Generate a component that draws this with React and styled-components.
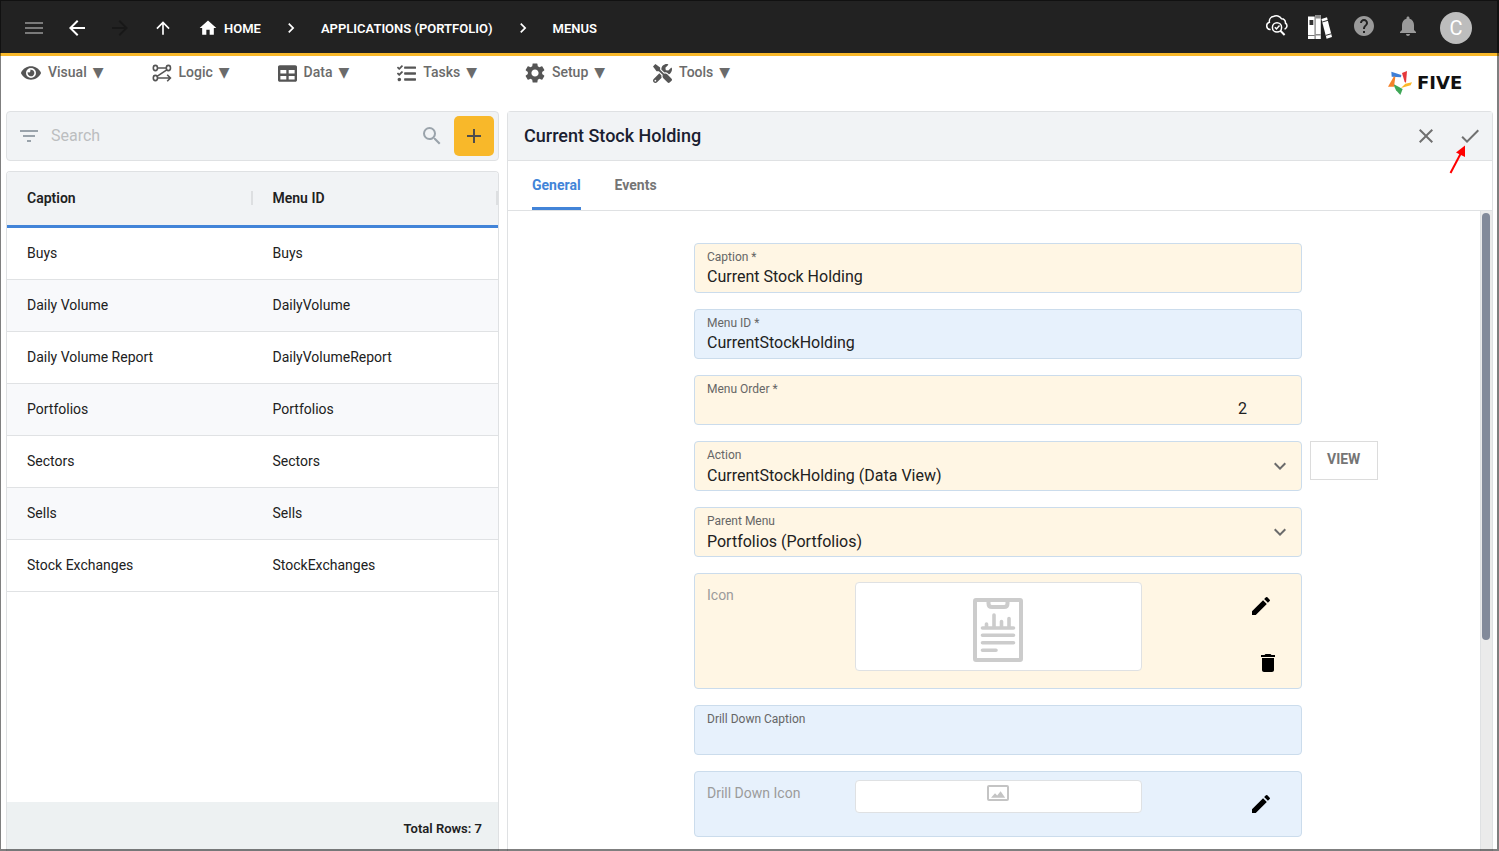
import React, { useState } from 'react';
import styled, { createGlobalStyle, css } from 'styled-components';
import {
  MdAdd,
  MdArrowBack,
  MdArrowForward,
  MdArrowUpward,
  MdCheck,
  MdChevronRight,
  MdClose,
  MdDelete,
  MdEdit,
  MdFilterList,
  MdHelp,
  MdHome,
  MdKeyboardArrowDown,
  MdMenu,
  MdNotifications,
  MdSearch,
  MdSettings,
} from 'react-icons/md';
import { FaEye, FaTable, FaTasks, FaTools } from 'react-icons/fa';

const GlobalStyle = createGlobalStyle`
  * {
    box-sizing: border-box;
  }
  body {
    margin: 0;
    background: #ffffff;
    color: #212121;
    font-family: Roboto, "Liberation Sans", sans-serif;
    font-size: 14px;
  }
  button, input, select {
    font-family: inherit;
    margin: 0;
  }
  svg {
    display: block;
    flex: none;
  }
`;

const Page = styled.div`
  height: 100vh;
  display: flex;
  flex-direction: column;
  overflow: hidden;
  &::after {
    content: '';
    position: fixed;
    inset: 0;
    border: solid rgba(0, 0, 0, 0.5);
    border-width: 1px 2px 2px 1px;
    pointer-events: none;
  }
`;

/* top bar */
const TopBar = styled.header`
  flex: none;
  height: 56px;
  padding: 3px 27px 0 22px;
  display: flex;
  align-items: center;
  justify-content: space-between;
  background: #222222;
  border-bottom: 3px solid #f8b82a;
`;
const NavGroup = styled.nav`
  display: flex;
  align-items: center;
  gap: 19px;
`;
const IconButton = styled.button`
  flex: none;
  display: flex;
  align-items: center;
  justify-content: center;
  width: 24px;
  height: 24px;
  padding: 0;
  border: none;
  background: none;
  color: ${props => props.$color || '#ffffff'};
  font-size: ${props => props.$size || 24}px;
  cursor: pointer;
`;
const Crumbs = styled.div`
  display: flex;
  align-items: center;
  gap: 20px;
  margin-left: 4px;
  color: #ffffff;
  font-size: 20px;
`;
const Crumb = styled.a`
  display: flex;
  align-items: center;
  gap: 6px;
  color: #ffffff;
  font-size: 13px;
  font-weight: 600;
  text-decoration: none;
  text-transform: uppercase;
`;
const Tools = styled.div`
  display: flex;
  align-items: flex-start;
  gap: 20px;
  ${IconButton} {
    margin-top: 2px;
  }
`;
const Avatar = styled.button`
  width: 32px;
  height: 32px;
  padding: 0;
  border: none;
  border-radius: 50%;
  background: #bdbdbd;
  color: #ffffff;
  font-size: 20px;
  line-height: 32px;
`;

/* menu bar */
const MenuBar = styled.div`
  flex: none;
  height: 55px;
  padding: 0 23px 0 21px;
  display: flex;
  align-items: flex-start;
  justify-content: space-between;
`;
const MenuList = styled.nav`
  display: flex;
  gap: 48px;
  padding-top: 5px;
`;
const MenuButton = styled.button`
  display: flex;
  align-items: center;
  gap: 6px;
  height: 22px;
  padding: 0;
  border: none;
  background: none;
  color: #6b6b6b;
  font-size: 14px;
  font-weight: 500;
  svg {
    color: #555555;
    margin: 2px 1px 0 0;
  }
`;
const Caret = styled.span`
  font-family: 'DejaVu Sans', sans-serif;
  font-weight: 400;
`;
const Logo = styled.a`
  display: flex;
  align-items: center;
  gap: 5px;
  margin-top: 15px;
  color: #111111;
  font-family: 'DejaVu Sans', sans-serif;
  font-size: 18px;
  font-weight: 700;
  line-height: 24px;
  text-decoration: none;
`;
const Wordmark = styled.span`
  min-width: 59px;
`;

/* layout */
const Main = styled.main`
  flex: 1;
  min-height: 0;
  display: grid;
  grid-template-columns: minmax(0, 1fr) minmax(0, 2fr);
  gap: 8px;
  padding: 0 6px;
`;
const ListColumn = styled.section`
  min-height: 0;
  display: flex;
  flex-direction: column;
  gap: 10px;
`;
const panel = css`
  border: 1px solid #dfe1e3;
  border-radius: 4px;
`;
const SearchBar = styled.form`
  ${panel}
  flex: none;
  height: 50px;
  padding: 0 4px 0 10px;
  display: flex;
  align-items: center;
  gap: 10px;
  background: #f1f3f5;
`;
const SearchInput = styled.input`
  flex: 1;
  min-width: 0;
  padding: 0 0 2px;
  border: none;
  outline: none;
  background: none;
  font-size: 16px;
  &::placeholder {
    color: #bcbec0;
  }
`;
const AddButton = styled.button`
  flex: none;
  display: flex;
  align-items: center;
  justify-content: center;
  width: 40px;
  height: 40px;
  padding: 0;
  border: none;
  border-radius: 5px;
  background: #f8b82a;
  color: #4d4d4d;
  font-size: 24px;
`;
const TablePanel = styled.div`
  ${panel}
  flex: 1;
  min-height: 0;
  display: flex;
  flex-direction: column;
  border-bottom: none;
  border-radius: 4px 4px 0 0;
  overflow: hidden;
`;
const TableScroll = styled.div`
  flex: 1;
  min-height: 0;
  overflow: hidden;
`;
const Table = styled.table`
  width: 100%;
  table-layout: fixed;
  border-collapse: separate;
  border-spacing: 0;
`;
const HeadCell = styled.th`
  height: 56px;
  padding: 0 0 2px 20px;
  background: #f1f3f5;
  border-bottom: 3px solid #4284d8;
  font-size: 14px;
  font-weight: 600;
  text-align: left;
`;
const HeadLabel = styled.span`
  display: block;
  line-height: 14px;
  border-right: 2px solid #dddfe1;
`;
const Row = styled.tr`
  background: #ffffff;
  &:nth-child(even) {
    background: #f8f9fb;
  }
`;
const Cell = styled.td`
  height: 52px;
  padding: 0 0 2px 20px;
  border-bottom: 1px solid #e0e2e4;
  font-size: 14px;
`;
const TableFooter = styled.div`
  flex: none;
  height: 49px;
  padding: 0 16px 0 0;
  background: #edf1f2;
  font-size: 13px;
  font-weight: 600;
  line-height: 54px;
  text-align: right;
`;

/* record form */
const DetailPanel = styled.section`
  ${panel}
  min-height: 0;
  display: flex;
  flex-direction: column;
  border-bottom: none;
  border-radius: 4px 4px 0 0;
`;
const DetailHeader = styled.div`
  flex: none;
  height: 49px;
  padding: 0 10px 0 16px;
  display: flex;
  align-items: center;
  gap: 20px;
  background: #f1f3f5;
  border-bottom: 1px solid #dfe1e3;
`;
const Title = styled.h1`
  flex: 1;
  margin: 0;
  padding-bottom: 2px;
  color: #1a2030;
  font-size: 18px;
  font-weight: 500;
`;
const CheckHolder = styled.div`
  position: relative;
`;
const Pointer = styled.svg`
  position: absolute;
  top: 20px;
  left: -10px;
  pointer-events: none;
`;
const Tabs = styled.div`
  flex: none;
  height: 50px;
  padding: 0 24px;
  display: flex;
  gap: 34px;
  border-bottom: 1px solid #dfe1e3;
`;
const Tab = styled.button`
  padding: 1px 0 0;
  border: none;
  border-bottom: 3px solid ${props => (props.$active ? '#4284d8' : 'transparent')};
  border-radius: 2px 2px 0 0;
  background: none;
  color: ${props => (props.$active ? '#4284d8' : '#757575')};
  font-size: 14px;
  font-weight: 700;
`;
const Body = styled.div`
  flex: 1;
  min-height: 0;
  display: flex;
`;
const FormArea = styled.div`
  flex: 1;
  min-width: 0;
  overflow-y: auto;
  scrollbar-width: none;
  padding: 32px 0 32px 8px;
`;
const Track = styled.div`
  flex: none;
  width: 12px;
  padding: 2px 2px 0 1px;
  background: #ebebeb;
  border-left: 1px solid #dfe1e3;
`;
const Thumb = styled.div`
  height: 67%;
  width: 8px;
  border-radius: 4px;
  background: #828a9a;
`;
const Form = styled.form`
  display: flex;
  flex-direction: column;
  gap: 16px;
`;
const FormRow = styled.div`
  display: grid;
  grid-template-columns: 1fr minmax(0, 608px) 1fr;
  gap: 8px;
  align-items: start;
`;
const tone = css`
  background-color: ${props => (props.$tone === 'blue' ? '#e7f1fc' : '#fff6e4')};
  border: 1px solid #cbdcec;
  border-radius: 4px;
`;
const Field = styled.div`
  ${tone}
  grid-column: 2;
  height: 50px;
  padding: 5px 9px 0 12px;
  display: grid;
  grid-template-columns: minmax(0, 1fr) 24px;
  grid-template-rows: 16px 22px;
  align-items: center;
  svg {
    grid-area: 1 / 2 / 3 / 3;
    color: #6b6b6b;
    font-size: 24px;
    pointer-events: none;
  }
`;
const FieldLabel = styled.label`
  grid-area: 1 / 1 / 2 / 2;
  color: #666666;
  font-size: 12px;
  line-height: 16px;
`;
const value = css`
  grid-area: 2 / 1 / 3 / 3;
  width: 100%;
  height: 22px;
  padding: 0;
  border: none;
  outline: none;
  background: none;
  color: #212121;
  font-size: 16px;
`;
const TextInput = styled.input`
  ${value}
  text-align: ${props => props.$align || 'left'};
  padding-right: ${props => (props.$align === 'right' ? 45 : 0)}px;
`;
const Select = styled.select`
  ${value}
  padding-top: 2px;
  appearance: none;
`;
const ViewButton = styled.button`
  justify-self: start;
  height: 39px;
  padding: 0 17px 3px 16px;
  border: 1px solid #dcdcdc;
  background: #ffffff;
  color: #757575;
  font-size: 14px;
  font-weight: 700;
`;
const ImageField = styled.div`
  ${tone}
  grid-column: 2;
  min-height: 66px;
  padding: 8px 12px 13px;
  display: grid;
  grid-template-columns: 1fr minmax(0, 287px) 1fr;
  align-items: start;
`;
const ImageLabel = styled.span`
  padding-top: 5px;
  color: #9b9b9b;
  font-size: 14px;
  line-height: 17px;
`;
const Preview = styled.div`
  height: ${props => props.$height}px;
  padding-top: ${props => props.$top}px;
  display: flex;
  justify-content: center;
  align-items: flex-start;
  border: 1px solid #dfe1e3;
  border-radius: 4px;
  background: #ffffff;
`;
const ImageActions = styled.div`
  display: flex;
  flex-direction: column;
  align-items: flex-end;
  gap: 33px;
  padding: 12px 9px 0 0;
  button:first-child {
    margin-right: 7px;
  }
`;

const CloudSearchIcon = () => (
  <svg width="24" height="24" viewBox="0 0 24 24" fill="none" stroke="#ffffff" strokeWidth="1.5">
    <path d="M6.6 15.6H6a3.8 3.8 0 0 1-.6-7.4A4.8 4.8 0 0 1 9.2 2.6a6 6 0 0 1 8.4 2.2 3.7 3.7 0 0 1 3.8 4.2c2.2 1.4 2.2 5-.8 6.2" />
    <circle cx="13" cy="13.4" r="4.6" />
    <path d="M16.4 16.8l4.2 4.2" strokeWidth="2" />
    <path d="M10.8 13.2l1.7 1.7 3-3.4" />
  </svg>
);

const BooksIcon = () => (
  <svg width="24" height="26" viewBox="0 0 24 26">
    <path d="M0 3.5h6.7V26H0z" fill="#ffffff" />
    <path d="M1.5 7h3.8v5H1.5z" fill="#333333" />
    <path d="M0 22h6.7v1H0z" fill="#777777" />
    <path d="M7.4 2h5.4v24H7.4z" fill="#ffffff" />
    <path d="M7.4 2h5.4v3.5H7.4zM7.4 21h5.4v1.5H7.4z" fill="#8c8c8c" />
    <path d="M13.4 6l5.6-1.8L24 24l-5.4 1.8z" fill="#ffffff" />
    <path d="M14.2 9l5.8-1.7M17.8 22.4l5.6-1.7" stroke="#333333" strokeWidth="1" />
  </svg>
);

const LogicIcon = () => (
  <svg width="20" height="18" viewBox="0 0 20 18" fill="none" stroke="#555555" strokeWidth="1.6">
    <ellipse cx="3.4" cy="4" rx="2.1" ry="2.6" />
    <ellipse cx="16.4" cy="4" rx="2.1" ry="2.6" />
    <ellipse cx="3.4" cy="14" rx="2.1" ry="2.6" />
    <path d="M5.6 4h8.6M14.8 5.8L5 12.4M5.6 14h12.2M15.2 10.8l3.2 3.2-3.2 3.2" />
  </svg>
);

const ClipboardIcon = () => (
  <svg width="50" height="64" viewBox="0 0 50 64" fill="none" stroke="#cccccc" strokeWidth="4">
    <rect x="2" y="2" width="46" height="60" rx="1" />
    <path d="M15.5 2v3.5q0 3.5 3.5 3.5h12q3.5 0 3.5-3.5V2" />
    <path
      d="M9.5 30h31M9.5 37.3h31M9.5 44.8h31M9.5 52.3h13.5M13.5 29v-3M21 29V17M28.5 29v-5.5M36 29v-8.5"
      strokeWidth="3.6"
      strokeLinecap="round"
    />
  </svg>
);

const ImageIcon = () => (
  <svg width="22" height="16" viewBox="0 0 22 16">
    <rect x="1" y="1" width="20" height="14" rx="1" fill="none" stroke="#c4c4c4" strokeWidth="2" />
    <path d="M4 12.8l4-4.6 2.2 2.4 3.4-4.4 4.6 6.6z" fill="#c4c4c4" />
  </svg>
);

const LogoMark = () => (
  <svg width="24" height="24" viewBox="445 216 72 72">
    <path d="M455 218l30 10-1 7-28-2z" fill="#3f7fd6" />
    <path d="M487 222l15-6-3 35-4-2z" fill="#e5383b" />
    <path d="M484 267l13-13 20-4-4 9z" fill="#fbb829" />
    <path d="M460 254l29 16-7 18-13-14z" fill="#3fa757" />
    <path d="M445 263l18-31 4 2-4 29z" fill="#f5822a" />
  </svg>
);

const menus = [
  { name: 'Visual', icon: <FaEye size={20} /> },
  { name: 'Logic', icon: <LogicIcon /> },
  { name: 'Data', icon: <FaTable size={19} /> },
  { name: 'Tasks', icon: <FaTasks size={19} /> },
  { name: 'Setup', icon: <MdSettings size={20} viewBox='2 2 20 20' /> },
  { name: 'Tools', icon: <FaTools size={19} /> },
];

const rows = [
  { caption: 'Buys', id: 'Buys' },
  { caption: 'Daily Volume', id: 'DailyVolume' },
  { caption: 'Daily Volume Report', id: 'DailyVolumeReport' },
  { caption: 'Portfolios', id: 'Portfolios' },
  { caption: 'Sectors', id: 'Sectors' },
  { caption: 'Sells', id: 'Sells' },
  { caption: 'Stock Exchanges', id: 'StockExchanges' },
];

const TextField = ({ id, label, text = '', $tone, align }) => (
  <FormRow>
    <Field $tone={$tone}>
      <FieldLabel htmlFor={id}>{label}</FieldLabel>
      <TextInput id={id} defaultValue={text} $align={align} />
    </Field>
  </FormRow>
);

const SelectField = ({ id, label, text, children }) => (
  <FormRow>
    <Field>
      <FieldLabel htmlFor={id}>{label}</FieldLabel>
      <Select id={id} defaultValue={text}>
        <option>{text}</option>
      </Select>
      <MdKeyboardArrowDown />
    </Field>
    {children}
  </FormRow>
);

const App = () => {
  const [tab, setTab] = useState('General');

  return (
    <>
      <GlobalStyle />
      <Page>
        <TopBar>
          <NavGroup>
            <IconButton aria-label='Menu' $color='#7a7a7a'><MdMenu /></IconButton>
            <IconButton aria-label='Back'><MdArrowBack /></IconButton>
            <IconButton aria-label='Forward' $color='#181818' disabled><MdArrowForward /></IconButton>
            <IconButton aria-label='Up' $size={20}><MdArrowUpward /></IconButton>
            <Crumbs>
              <Crumb href='#home'><MdHome size={20} />Home</Crumb>
              <MdChevronRight />
              <Crumb href='#applications'>Applications (Portfolio)</Crumb>
              <MdChevronRight />
              <Crumb href='#menus'>Menus</Crumb>
            </Crumbs>
          </NavGroup>
          <Tools>
            <IconButton aria-label='Inspect'><CloudSearchIcon /></IconButton>
            <IconButton aria-label='Library'><BooksIcon /></IconButton>
            <IconButton aria-label='Help' $color='#9a9a9a'><MdHelp /></IconButton>
            <IconButton aria-label='Notifications' $color='#9a9a9a'><MdNotifications /></IconButton>
            <Avatar>C</Avatar>
          </Tools>
        </TopBar>

        <MenuBar>
          <MenuList>
            {menus.map(menu => (
              <MenuButton key={menu.name}>
                {menu.icon}
                <span>{menu.name}</span>
                <Caret>▼</Caret>
              </MenuButton>
            ))}
          </MenuList>
          <Logo href='#five'>
            <LogoMark />
            <Wordmark>FIVE</Wordmark>
          </Logo>
        </MenuBar>

        <Main>
          <ListColumn>
            <SearchBar onSubmit={e => e.preventDefault()}>
              <IconButton type='button' aria-label='Filter' $color='#9aa3ab'><MdFilterList /></IconButton>
              <SearchInput aria-label='Search' placeholder='Search' />
              <IconButton aria-label='Run search' $color='#9aa3ab'><MdSearch /></IconButton>
              <AddButton type='button' aria-label='Add'><MdAdd /></AddButton>
            </SearchBar>
            <TablePanel>
              <TableScroll>
                <Table>
                  <thead>
                    <tr>
                      <HeadCell><HeadLabel>Caption</HeadLabel></HeadCell>
                      <HeadCell><HeadLabel>Menu ID</HeadLabel></HeadCell>
                    </tr>
                  </thead>
                  <tbody>
                    {rows.map(row => (
                      <Row key={row.id}>
                        <Cell>{row.caption}</Cell>
                        <Cell>{row.id}</Cell>
                      </Row>
                    ))}
                  </tbody>
                </Table>
              </TableScroll>
              <TableFooter>Total Rows: {rows.length}</TableFooter>
            </TablePanel>
          </ListColumn>

          <DetailPanel>
            <DetailHeader>
              <Title>Current Stock Holding</Title>
              <IconButton aria-label='Cancel' $color='#707070'><MdClose /></IconButton>
              <CheckHolder>
                <IconButton aria-label='Save' $color='#707070'><MdCheck /></IconButton>
                <Pointer width='20' height='32' viewBox='0 0 20 32'>
                  <path d='M2.5 29L13 9' stroke='#ff0000' strokeWidth='2' />
                  <path d='M17 1.5L17 13L8 8.5z' fill='#ff0000' />
                </Pointer>
              </CheckHolder>
            </DetailHeader>
            <Tabs role='tablist'>
              {['General', 'Events'].map(name => (
                <Tab
                  key={name}
                  role='tab'
                  aria-selected={tab === name}
                  $active={tab === name}
                  onClick={() => setTab(name)}
                >
                  {name}
                </Tab>
              ))}
            </Tabs>
            <Body>
              <FormArea>
                <Form onSubmit={e => e.preventDefault()}>
                  <TextField id='caption' label='Caption *' text='Current Stock Holding' />
                  <TextField id='menuId' label='Menu ID *' text='CurrentStockHolding' $tone='blue' />
                  <TextField id='menuOrder' label='Menu Order *' text='2' align='right' />
                  <SelectField id='action' label='Action' text='CurrentStockHolding (Data View)'>
                    <ViewButton type='button'>VIEW</ViewButton>
                  </SelectField>
                  <SelectField id='parentMenu' label='Parent Menu' text='Portfolios (Portfolios)' />
                  <FormRow>
                    <ImageField>
                      <ImageLabel>Icon</ImageLabel>
                      <Preview $height={89} $top={15}><ClipboardIcon /></Preview>
                      <ImageActions>
                        <IconButton type='button' aria-label='Edit icon' $color='#000000'><MdEdit /></IconButton>
                        <IconButton type='button' aria-label='Delete icon' $color='#000000'><MdDelete /></IconButton>
                      </ImageActions>
                    </ImageField>
                  </FormRow>
                  <TextField id='drillCaption' label='Drill Down Caption' $tone='blue' />
                  <FormRow>
                    <ImageField $tone='blue'>
                      <ImageLabel>Drill Down Icon</ImageLabel>
                      <Preview $height={33} $top={4}><ImageIcon /></Preview>
                      <ImageActions>
                        <IconButton type='button' aria-label='Edit drill down icon' $color='#000000'><MdEdit /></IconButton>
                      </ImageActions>
                    </ImageField>
                  </FormRow>
                </Form>
              </FormArea>
              <Track><Thumb /></Track>
            </Body>
          </DetailPanel>
        </Main>
      </Page>
    </>
  );
};

export default App;
